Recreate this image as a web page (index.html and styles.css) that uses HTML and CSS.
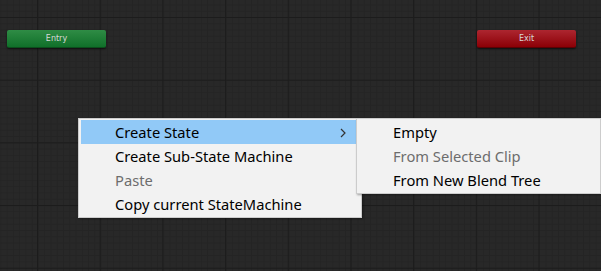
FILE: index.html
```html
<!DOCTYPE html>
<html lang="en">
<head>
  <meta charset="UTF-8" />
  <title>Animator</title>
  <link rel="stylesheet" href="styles.css">
</head>
<body>
  <div class="graph">
    <div class="node node-entry">Entry</div>
    <div class="node node-exit">Exit</div>

    <ul class="menu menu-main">
      <li class="menu-item active">Create State
        <svg class="chevron" width="6" height="10" viewBox="0 0 6 10"><path d="M1 1 L5 5 L1 9" fill="none" stroke="#333" stroke-width="1.2"/></svg>
      </li>
      <li class="menu-item">Create Sub-State Machine</li>
      <li class="menu-item disabled">Paste</li>
      <li class="menu-item">Copy current StateMachine</li>
    </ul>

    <ul class="menu menu-sub">
      <li class="menu-item">Empty</li>
      <li class="menu-item disabled">From Selected Clip</li>
      <li class="menu-item">From New Blend Tree</li>
    </ul>
  </div>
</body>
</html>
```

FILE: styles.css
```css
html, body {
margin: 0;
padding: 0;
}

.graph {
position: relative;
width: 601px;
height: 271px;
overflow: hidden;
background-color: #282828;
background-image:
  linear-gradient(to right, #1c1c1c 1px, transparent 1px),
  linear-gradient(to bottom, #1c1c1c 1px, transparent 1px),
  linear-gradient(to right, #242424 1px, transparent 1px),
  linear-gradient(to bottom, #242424 1px, transparent 1px);
background-size: 62.7px 62.7px, 62.7px 62.7px, 6.27px 6.27px, 6.27px 6.27px;
background-position: 37px 17px, 37px 17px, 0.4px 4.5px, 0.4px 4.5px;
}

.node {
position: absolute;
top: 30px;
width: 99px;
height: 17px;
border-radius: 2px;
font-family: "DejaVu Sans", sans-serif;
font-size: 8px;
line-height: 17px;
text-align: center;
color: #d8d8d8;
box-shadow: 0 1px 2px rgba(0, 0, 0, 0.6);
}

.node-entry {
left: 7px;
background: linear-gradient(to bottom, #2f8c45, #10702a);
border-bottom: 1px solid #0b4f1d;
}

.node-exit {
left: 477px;
background: linear-gradient(to bottom, #ad2630, #8c0006);
border-bottom: 1px solid #5e0004;
}

.menu {
position: absolute;
top: 118px;
margin: 0;
list-style: none;
background: #f2f2f2;
border: 1px solid #cccccc;
padding: 1px 2px;
font-family: "Noto Sans", sans-serif;
font-size: 14.7px;
color: #000;
box-shadow: 1px 1px 2px rgba(0, 0, 0, 0.35);
}

.menu-main {
left: 78px;
width: 278px;
}

.menu-sub {
left: 356px;
width: 239px;
}

.menu-item {
position: relative;
height: 24px;
line-height: 25px;
padding-left: 34px;
white-space: nowrap;
}

.menu-item.active {
background: #91c9f7;
}

.menu-item.disabled {
color: #6d6d6d;
}

.chevron {
position: absolute;
right: 13px;
top: 8px;
}
```
